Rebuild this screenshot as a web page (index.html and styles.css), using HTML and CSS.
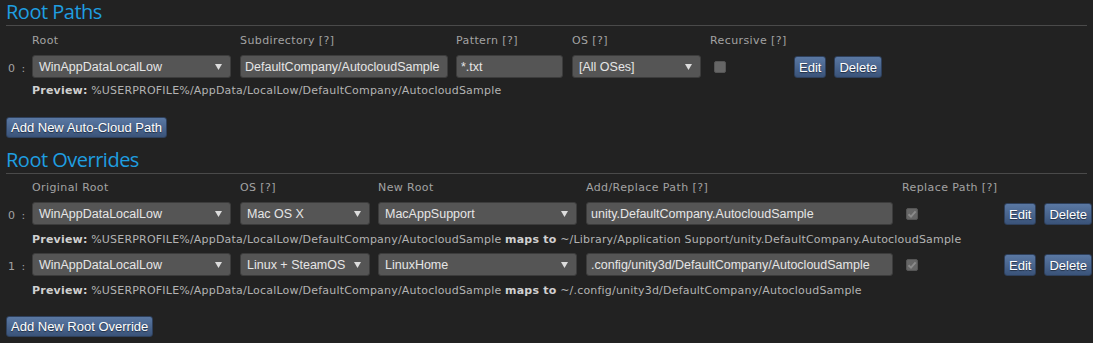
FILE: index.html
```html
<!DOCTYPE html>
<html lang="en">
<head>
  <meta charset="UTF-8" />
  <title>Auto-Cloud</title>
  <link rel="stylesheet" href="styles.css">
</head>
<body>
  <h2 class="section-title">Root Paths</h2>
  <div class="grid paths">
    <div></div>
    <div class="lbl">Root</div>
    <div class="lbl">Subdirectory [?]</div>
    <div class="lbl">Pattern [?]</div>
    <div class="lbl">OS [?]</div>
    <div class="lbl">Recursive [?]</div>
    <div></div>

    <div class="idx">0 :</div>
    <div><div class="select w199"><span>WinAppDataLocalLow</span><svg class="arrow" width="7" height="6" viewBox="0 0 7 6"><path d="M0 0H7L3.5 6Z" fill="#ddd"/></svg></div></div>
    <div><input class="field w208" type="text" value="DefaultCompany/AutocloudSample"></div>
    <div><input class="field w107" type="text" value="*.txt"></div>
    <div><div class="select w129"><span>[All OSes]</span><svg class="arrow" width="7" height="6" viewBox="0 0 7 6"><path d="M0 0H7L3.5 6Z" fill="#ddd"/></svg></div></div>
    <div class="chk-cell"><span class="chk"></span></div>
    <div class="actions"><button class="btn">Edit</button><button class="btn">Delete</button></div>

    <div></div>
    <div class="preview"><b>Preview:</b> %USERPROFILE%/AppData/LocalLow/DefaultCompany/AutocloudSample</div>
  </div>
  <button class="btn add">Add New Auto-Cloud Path</button>

  <h2 class="section-title">Root Overrides</h2>
  <div class="grid overrides">
    <div></div>
    <div class="lbl">Original Root</div>
    <div class="lbl">OS [?]</div>
    <div class="lbl">New Root</div>
    <div class="lbl">Add/Replace Path [?]</div>
    <div class="lbl">Replace Path [?]</div>
    <div></div>

    <div class="idx">0 :</div>
    <div><div class="select w199"><span>WinAppDataLocalLow</span><svg class="arrow" width="7" height="6" viewBox="0 0 7 6"><path d="M0 0H7L3.5 6Z" fill="#ddd"/></svg></div></div>
    <div><div class="select w130"><span>Mac OS X</span><svg class="arrow" width="7" height="6" viewBox="0 0 7 6"><path d="M0 0H7L3.5 6Z" fill="#ddd"/></svg></div></div>
    <div><div class="select w199"><span>MacAppSupport</span><svg class="arrow" width="7" height="6" viewBox="0 0 7 6"><path d="M0 0H7L3.5 6Z" fill="#ddd"/></svg></div></div>
    <div><input class="field w307" type="text" value="unity.DefaultCompany.AutocloudSample"></div>
    <div class="chk-cell"><span class="chk on"><svg width="12" height="12" viewBox="0 0 12 12"><path d="M2.5 6.2L5 8.6L9.6 3.4" fill="none" stroke="#8a8a8a" stroke-width="2"/></svg></span></div>
    <div class="actions"><button class="btn">Edit</button><button class="btn">Delete</button></div>

    <div></div>
    <div class="preview"><b>Preview:</b> %USERPROFILE%/AppData/LocalLow/DefaultCompany/AutocloudSample <b>maps to</b> ~/Library/Application Support/unity.DefaultCompany.AutocloudSample</div>

    <div class="idx">1 :</div>
    <div><div class="select w199"><span>WinAppDataLocalLow</span><svg class="arrow" width="7" height="6" viewBox="0 0 7 6"><path d="M0 0H7L3.5 6Z" fill="#ddd"/></svg></div></div>
    <div><div class="select w130"><span>Linux + SteamOS</span><svg class="arrow" width="7" height="6" viewBox="0 0 7 6"><path d="M0 0H7L3.5 6Z" fill="#ddd"/></svg></div></div>
    <div><div class="select w199"><span>LinuxHome</span><svg class="arrow" width="7" height="6" viewBox="0 0 7 6"><path d="M0 0H7L3.5 6Z" fill="#ddd"/></svg></div></div>
    <div><input class="field w307" type="text" value=".config/unity3d/DefaultCompany/AutocloudSample"></div>
    <div class="chk-cell"><span class="chk on"><svg width="12" height="12" viewBox="0 0 12 12"><path d="M2.5 6.2L5 8.6L9.6 3.4" fill="none" stroke="#8a8a8a" stroke-width="2"/></svg></span></div>
    <div class="actions"><button class="btn">Edit</button><button class="btn">Delete</button></div>

    <div></div>
    <div class="preview"><b>Preview:</b> %USERPROFILE%/AppData/LocalLow/DefaultCompany/AutocloudSample <b>maps to</b> ~/.config/unity3d/DefaultCompany/AutocloudSample</div>
  </div>
  <button class="btn add">Add New Root Override</button>
</body>
</html>
```

FILE: styles.css
```css
:root {
  --fondo: #222222;
  --azul: #1f9ee0;
  --linea: #4a4a4a;
  --campo: #555555;
  --texto: #e6e6e6;
  --etiqueta: #a3a3a3;
}

body {
  margin: 0;
  padding: 0 6px;
  background: var(--fondo);
  color: var(--texto);
  font-family: 'DejaVu Sans', Verdana, sans-serif;
}

.section-title {
  margin: 0;
  height: 25px;
  line-height: 24px;
  font-family: 'Open Sans', sans-serif;
  font-weight: normal;
  font-size: 20px;
  color: var(--azul);
  border-bottom: 1px solid var(--linea);
  letter-spacing: -0.5px;
}

.grid {
  display: grid;
  align-items: end;
}

.paths {
  grid-template-columns: 26px 208px 216px 116px 138px 84px auto;
  padding-top: 8px;
}

.overrides {
  grid-template-columns: 26px 208px 138px 208px 316px 102px auto;
  padding-top: 7px;
}

.lbl {
  font-size: 11px;
  line-height: 14px;
  color: var(--etiqueta);
  letter-spacing: 0.4px;
  margin-bottom: 7px;
}

.idx {
  font-size: 11px;
  line-height: 14px;
  color: var(--etiqueta);
  padding-left: 2px;
  margin-bottom: 2px;
  letter-spacing: 1.5px;
}

.select,
.field {
  box-sizing: border-box;
  height: 23px;
  background: var(--campo);
  border: 1px solid #3c3c3c;
  border-radius: 3px;
  color: var(--texto);
  font-family: 'Liberation Sans', Arial, sans-serif;
  font-size: 12.5px;
  margin: 0;
}

.select {
  display: flex;
  align-items: center;
  justify-content: space-between;
  padding: 0 8px 0 6px;
}

.select .arrow {
  margin-top: 1px;
}

.field {
  display: block;
  padding: 0 4px;
  outline: none;
}

.w107 { width: 107px; }
.w129 { width: 129px; }
.w130 { width: 130px; }
.w199 { width: 199px; }
.w208 { width: 208px; }
.w307 { width: 307px; }

.chk-cell {
  align-self: center;
  padding-left: 4px;
}

.chk {
  display: block;
  box-sizing: border-box;
  width: 12px;
  height: 12px;
  background: #666;
  border: 1px solid #555;
  border-radius: 2px;
}

.chk svg {
  display: block;
  margin: -1px;
}

.actions {
  display: flex;
  gap: 8px;
}

.btn {
  box-sizing: border-box;
  height: 22px;
  padding: 0 4px;
  border: 1px solid #2e405c;
  border-radius: 3px;
  background: linear-gradient(to bottom, #5a78a3, #3a5379);
  color: #fff;
  font-family: 'Liberation Sans', Arial, sans-serif;
  font-size: 13px;
  text-shadow: 0 1px 1px #00000080;
  cursor: pointer;
}

.preview {
  grid-column: 2 / -1;
  font-size: 11px;
  line-height: 14px;
  color: #b3b3b3;
  margin-top: 6px;
  letter-spacing: 0.2px;
  white-space: nowrap;
}

.preview b {
  color: #d0d0d0;
}

.overrides .preview {
  margin-top: 8px;
  margin-bottom: 6px;
}

.add {
  display: block;
  margin: 19px 0 10px;
  height: 21px;
}

.overrides + .add {
  margin-top: 12px;
}
```
